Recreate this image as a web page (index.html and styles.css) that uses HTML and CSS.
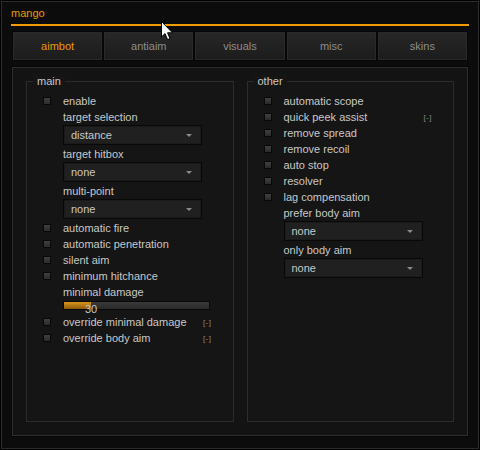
FILE: index.html
```html
<!DOCTYPE html>
<html lang="en">
<head>
  <meta charset="UTF-8" />
  <title>mango</title>
  <link rel="stylesheet" href="styles.css">
</head>
<body>
  <div class="window">
    <div class="title">mango</div>
    <div class="title-line"></div>

    <div class="tabs">
      <div class="tab active">aimbot</div>
      <div class="tab">antiaim</div>
      <div class="tab">visuals</div>
      <div class="tab">misc</div>
      <div class="tab">skins</div>
    </div>

    <div class="panel">
      <div class="group">
        <span class="group-title">main</span>
        <div class="row"><span class="check"></span><span>enable</span></div>
        <div class="label">target selection</div>
        <div class="select"><span>distance</span><span class="arrow"></span></div>
        <div class="label">target hitbox</div>
        <div class="select"><span>none</span><span class="arrow"></span></div>
        <div class="label">multi-point</div>
        <div class="select"><span>none</span><span class="arrow"></span></div>
        <div class="row"><span class="check"></span><span>automatic fire</span></div>
        <div class="row"><span class="check"></span><span>automatic penetration</span></div>
        <div class="row"><span class="check"></span><span>silent aim</span></div>
        <div class="row"><span class="check"></span><span>minimum hitchance</span></div>
        <div class="label">minimal damage</div>
        <div class="slider">
          <div class="slider-fill" style="width: 27px;"></div>
          <span class="slider-value" style="left: 27px;">30</span>
        </div>
        <div class="row"><span class="check"></span><span>override minimal damage</span><span class="bind">[-]</span></div>
        <div class="row"><span class="check"></span><span>override body aim</span><span class="bind">[-]</span></div>
      </div>

      <div class="group">
        <span class="group-title">other</span>
        <div class="row"><span class="check"></span><span>automatic scope</span></div>
        <div class="row"><span class="check"></span><span>quick peek assist</span><span class="bind">[-]</span></div>
        <div class="row"><span class="check"></span><span>remove spread</span></div>
        <div class="row"><span class="check"></span><span>remove recoil</span></div>
        <div class="row"><span class="check"></span><span>auto stop</span></div>
        <div class="row"><span class="check"></span><span>resolver</span></div>
        <div class="row"><span class="check"></span><span>lag compensation</span></div>
        <div class="label">prefer body aim</div>
        <div class="select"><span>none</span><span class="arrow"></span></div>
        <div class="label">only body aim</div>
        <div class="select"><span>none</span><span class="arrow"></span></div>
      </div>
    </div>

    <!-- mouse pointer captured in the screenshot -->
    <svg class="cursor" width="13" height="20" viewBox="0 0 13 20">
      <path d="M0.5 0.5 L0.5 16 L4 12.6 L6.6 18.6 L9 17.6 L6.5 11.8 L11.5 11.8 Z" fill="#fff" stroke="#000" stroke-width="1"/>
    </svg>
  </div>
</body>
</html>
```

FILE: styles.css
```css
html, body {
  margin: 0;
  padding: 0;
  background-color: #000;
}
body {
  font-family: "Liberation Sans", Arial, sans-serif;
  font-size: 11px;
  color: #c8c8c8;
}
.window {
  position: relative;
  box-sizing: border-box;
  width: 478px;
  height: 448px;
  margin: 1px;
  padding: 0 10px;
  background-color: #0c0c0c;
  border: 1px solid #2c2c2c;
}
.title {
  height: 22px;
  line-height: 20px;
  padding-top: 1px;
  box-sizing: border-box;
  margin-left: -1px;
  color: #e89b00;
}
.title-line {
  height: 2px;
  margin: 0 -1px 5px -1px;
  background-color: #f09c00;
}
.tabs {
  display: grid;
  grid-template-columns: repeat(5, 1fr);
  height: 30px;
}
.tab {
  display: flex;
  align-items: center;
  justify-content: center;
  border: 1px solid #070707;
  box-shadow: inset 0 0 0 1px #2a2a2a;
  background-color: #1d1d1d;
  background-image:
    repeating-conic-gradient(rgba(255,255,255,0.025) 0 25%, transparent 0 50%),
    linear-gradient(#252525, #191919);
  background-size: 2px 2px, 100% 100%;
  color: #8d8d8d;
}
.tab.active {
  color: #e89b00;
}
.panel {
  display: grid;
  grid-template-columns: 1fr 1fr;
  gap: 13px;
  box-sizing: border-box;
  height: 369px;
  margin-top: 6px;
  padding: 13px;
  border: 1px solid #2e2e2e;
  outline: 1px solid #070707;
  background-color: #111;
  background-image: repeating-conic-gradient(#171717 0 25%, #101010 0 50%);
  background-size: 2px 2px;
}
.group {
  position: relative;
  padding: 11px 21px 0 16px;
  border: 1px solid #2c2c2c;
  background-color: #151515;
}
.group-title {
  position: absolute;
  top: -8px;
  left: 6px;
  padding: 0 4px 0 4px;
  line-height: 14px;
  background-color: #151515;
}
.row {
  display: flex;
  align-items: center;
  height: 16px;
}
.check {
  box-sizing: border-box;
  width: 8px;
  height: 8px;
  margin-right: 12px;
  border: 1px solid #080808;
  background: linear-gradient(#404040, #2b2b2b);
}
.bind {
  margin-left: auto;
  font-size: 8px;
  letter-spacing: 0.5px;
  color: #8a8a8a;
}
.label {
  height: 16px;
  line-height: 16px;
  margin-left: 20px;
}
.select {
  display: flex;
  align-items: center;
  justify-content: space-between;
  box-sizing: border-box;
  width: 139px;
  height: 20px;
  margin: 0 0 1px 20px;
  padding: 0 9px 0 7px;
  border: 1px solid #080808;
  box-shadow: inset 0 0 0 1px #1a1a1a;
  background-color: #202020;
}
.arrow {
  width: 0;
  height: 0;
  border-left: 3px solid transparent;
  border-right: 3px solid transparent;
  border-top: 3px solid #8a8a8a;
}
.slider {
  position: relative;
  box-sizing: border-box;
  width: 147px;
  height: 9px;
  margin: 1px 0 4px 20px;
  border: 1px solid #080808;
  background: linear-gradient(#3a3a3a, #2a2a2a);
}
.slider-fill {
  height: 100%;
  background: linear-gradient(#d8941a, #8c5a0c);
}
.slider-value {
  position: absolute;
  top: 1px;
  transform: translateX(-50%);
  line-height: 12px;
  color: #c8c8c8;
}
.cursor {
  position: absolute;
  left: 159px;
  top: 19px;
}
```
